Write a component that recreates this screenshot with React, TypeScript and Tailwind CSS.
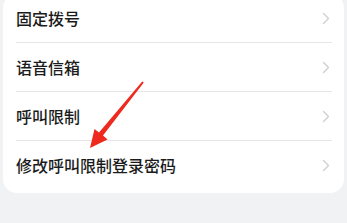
import React from "react";

const rows = ["固定拨号", "语音信箱", "呼叫限制", "修改呼叫限制登录密码"];

function Chevron() {
  return (
    <svg width="8" height="13" viewBox="0 0 8 13" fill="none">
      <path d="M1.5 1.5 L6.5 6.5 L1.5 11.5" stroke="#cdcdd0" strokeWidth="1.3" strokeLinecap="round" strokeLinejoin="round" />
    </svg>
  );
}

export default function App() {
  return (
    <div
      className="relative h-[223px] w-[347px] overflow-hidden bg-[#f1f2f4]"
      style={{ fontFamily: '"Noto Sans CJK SC", "Noto Sans", sans-serif' }}
    >
      <div className="mx-[3px] -mt-[6px] rounded-[14px] bg-white pb-[4px]">
        {rows.map((label, i) => (
          <div key={label} className="ml-[13px] mr-[12px]">
            <div className="flex h-[48px] items-center justify-between pr-[2px]">
              <span className="text-[16px] font-medium leading-none text-[#1b1b1b]">{label}</span>
              <Chevron />
            </div>
            {i < rows.length - 1 && <div className="h-px bg-[#e6e6e8]" />}
          </div>
        ))}
      </div>

      <svg className="absolute left-0 top-0" width="347" height="223" viewBox="0 0 347 223">
        <polygon
          points="142.2,81.4 143.8,82.6 103,135.5 107.5,139.5 90,148 94.5,129 99,132.5"
          fill="#ee2a1f"
        />
      </svg>
    </div>
  );
}
